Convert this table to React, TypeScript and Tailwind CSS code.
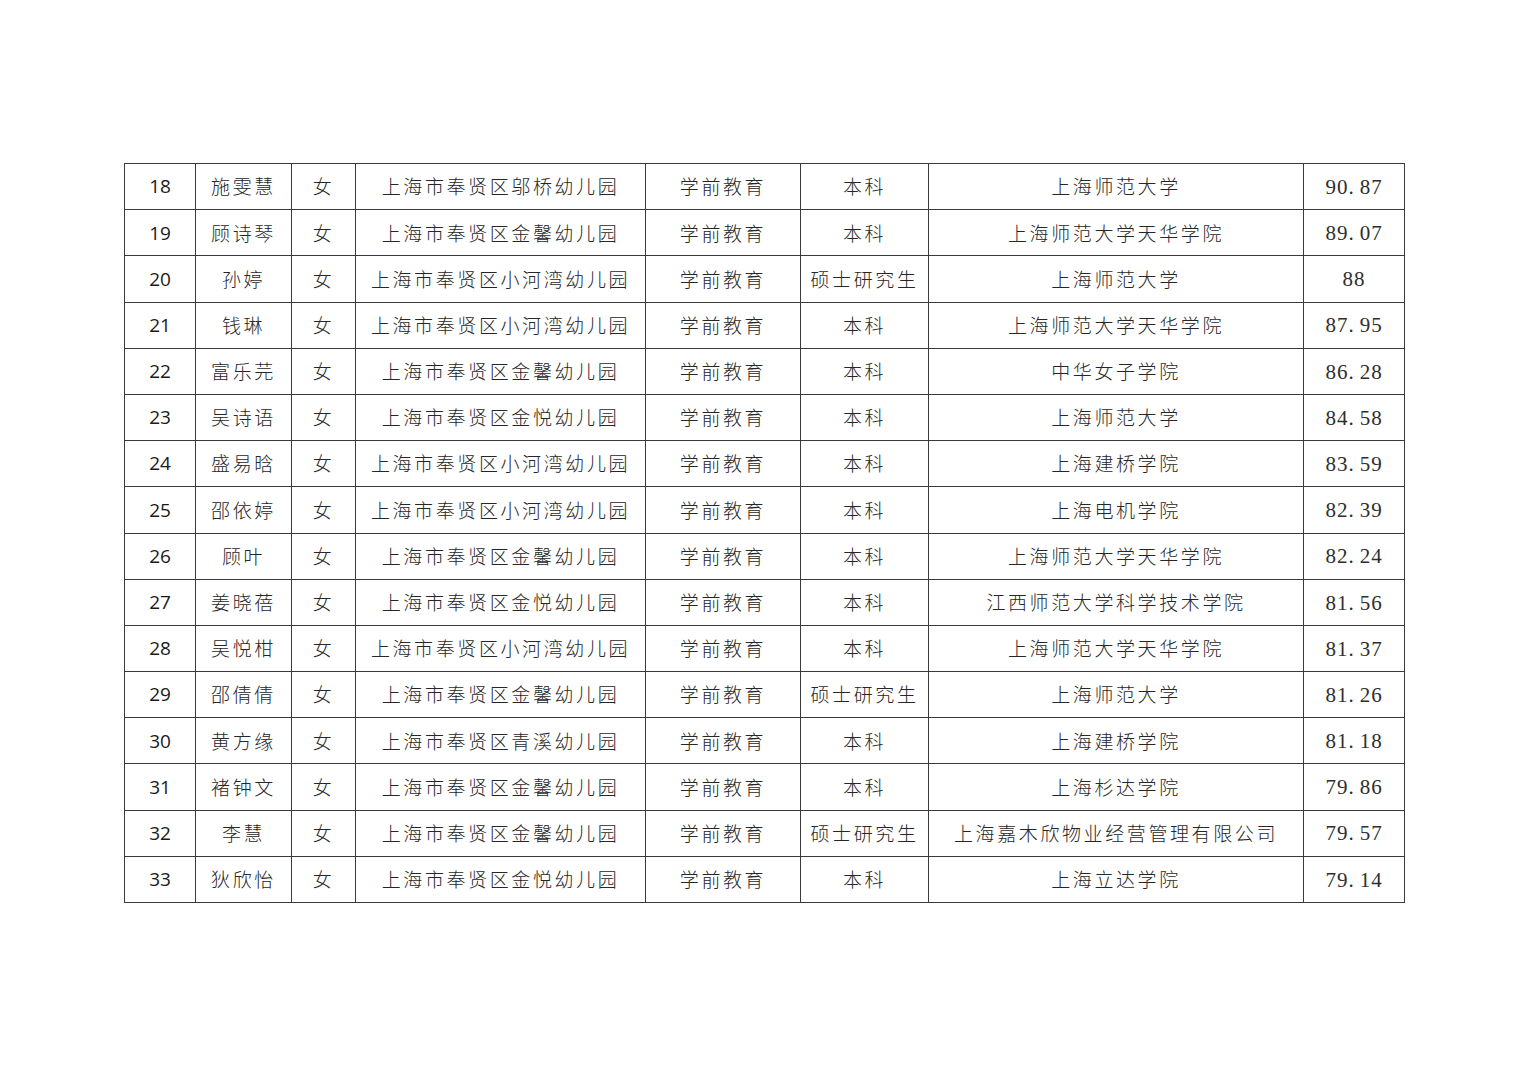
const rows: [string, string, string, string, string, string][] = [
  ["18", "施雯慧", "上海市奉贤区邬桥幼儿园", "本科", "上海师范大学", "90.87"],
  ["19", "顾诗琴", "上海市奉贤区金馨幼儿园", "本科", "上海师范大学天华学院", "89.07"],
  ["20", "孙婷", "上海市奉贤区小河湾幼儿园", "硕士研究生", "上海师范大学", "88"],
  ["21", "钱琳", "上海市奉贤区小河湾幼儿园", "本科", "上海师范大学天华学院", "87.95"],
  ["22", "富乐芫", "上海市奉贤区金馨幼儿园", "本科", "中华女子学院", "86.28"],
  ["23", "吴诗语", "上海市奉贤区金悦幼儿园", "本科", "上海师范大学", "84.58"],
  ["24", "盛易晗", "上海市奉贤区小河湾幼儿园", "本科", "上海建桥学院", "83.59"],
  ["25", "邵依婷", "上海市奉贤区小河湾幼儿园", "本科", "上海电机学院", "82.39"],
  ["26", "顾叶", "上海市奉贤区金馨幼儿园", "本科", "上海师范大学天华学院", "82.24"],
  ["27", "姜晓蓓", "上海市奉贤区金悦幼儿园", "本科", "江西师范大学科学技术学院", "81.56"],
  ["28", "吴悦柑", "上海市奉贤区小河湾幼儿园", "本科", "上海师范大学天华学院", "81.37"],
  ["29", "邵倩倩", "上海市奉贤区金馨幼儿园", "硕士研究生", "上海师范大学", "81.26"],
  ["30", "黄方缘", "上海市奉贤区青溪幼儿园", "本科", "上海建桥学院", "81.18"],
  ["31", "褚钟文", "上海市奉贤区金馨幼儿园", "本科", "上海杉达学院", "79.86"],
  ["32", "李慧", "上海市奉贤区金馨幼儿园", "硕士研究生", "上海嘉木欣物业经营管理有限公司", "79.57"],
  ["33", "狄欣怡", "上海市奉贤区金悦幼儿园", "本科", "上海立达学院", "79.14"],
];

const cjk = "font-['Noto_Sans_CJK_SC',sans-serif] font-light text-[19px] tracking-[2.6px] text-[#262626]";
const td = "border border-[#3a3a3a] p-0 text-center align-middle whitespace-nowrap";

function Score({ value }: { value: string }) {
  const [a, b] = value.split(".");
  return (
    <>
      {a}
      {b !== undefined && (
        <>
          <span className="mr-[5px]">.</span>
          {b}
        </>
      )}
    </>
  );
}

export default function App() {
  return (
    <div className="min-h-[1080px] w-[1528px] bg-white pt-[163px] pl-[124px]">
      <table className="table-fixed border-collapse">
        <colgroup>
          <col className="w-[71px]" />
          <col className="w-[96px]" />
          <col className="w-[64px]" />
          <col className="w-[290px]" />
          <col className="w-[155px]" />
          <col className="w-[128px]" />
          <col className="w-[375px]" />
          <col className="w-[101px]" />
        </colgroup>
        <tbody>
          {rows.map((r) => (
            <tr key={r[0]} className="h-[46.2px]">
              <td className={`${td} font-['Open_Sans',sans-serif] text-[19px] text-[#1a1a1a]`}>{r[0]}</td>
              <td className={`${td} ${cjk}`}>{r[1]}</td>
              <td className={`${td} ${cjk}`}>女</td>
              <td className={`${td} ${cjk}`}>{r[2]}</td>
              <td className={`${td} ${cjk}`}>学前教育</td>
              <td className={`${td} ${cjk}`}>{r[3]}</td>
              <td className={`${td} ${cjk}`}>{r[4]}</td>
              <td className={`${td} font-[family-name:'Liberation_Serif',serif] font-normal text-[21px] tracking-[1px] text-[#2e2e2e]`}>
                <span className="relative top-[1px]">
                  <Score value={r[5]} />
                </span>
              </td>
            </tr>
          ))}
        </tbody>
      </table>
    </div>
  );
}
